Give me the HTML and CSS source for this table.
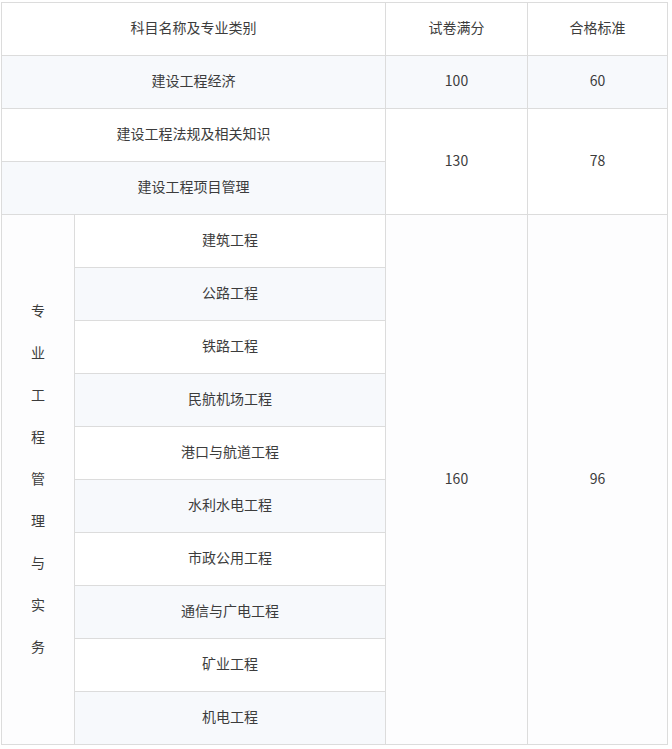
FILE: index.html
```html
<!DOCTYPE html>
<html lang="zh-CN">
<head>
<meta charset="utf-8">
<title>考试合格标准</title>
<link rel="stylesheet" href="styles.css">
</head>
<body>
<table class="score-table">
  <colgroup>
    <col class="c1">
    <col class="c2">
    <col class="c3">
    <col class="c4">
  </colgroup>
  <tr>
    <td colspan="2">科目名称及专业类别</td>
    <td>试卷满分</td>
    <td>合格标准</td>
  </tr>
  <tr>
    <td colspan="2">建设工程经济</td>
    <td>100</td>
    <td>60</td>
  </tr>
  <tr>
    <td colspan="2">建设工程法规及相关知识</td>
    <td rowspan="2">130</td>
    <td rowspan="2">78</td>
  </tr>
  <tr>
    <td colspan="2">建设工程项目管理</td>
  </tr>
  <tr>
    <td rowspan="10" class="vertical-cell"><span class="vertical">专业工程管理与实务</span></td>
    <td>建筑工程</td>
    <td rowspan="10" class="merged">160</td>
    <td rowspan="10" class="merged">96</td>
  </tr>
  <tr><td>公路工程</td></tr>
  <tr><td>铁路工程</td></tr>
  <tr><td>民航机场工程</td></tr>
  <tr><td>港口与航道工程</td></tr>
  <tr><td>水利水电工程</td></tr>
  <tr><td>市政公用工程</td></tr>
  <tr><td>通信与广电工程</td></tr>
  <tr><td>矿业工程</td></tr>
  <tr><td>机电工程</td></tr>
</table>
</body>
</html>
```
FILE: styles.css
```css
html, body {
  margin: 0;
  padding: 0;
  background: #ffffff;
}

body {
  padding: 2px 0 0 1px;
  font-family: "Noto Sans CJK SC", "Noto Sans", sans-serif;
  font-size: 14px;
  color: #3c3c3c;
}

.score-table {
  border-collapse: collapse;
  table-layout: fixed;
  width: 666px;
}

.c1 { width: 73px; }
.c2 { width: 311px; }
.c3 { width: 142px; }
.c4 { width: 140px; }

.score-table tr {
  height: 53px;
}

.score-table tr:nth-child(even) {
  background: #f7f9fc;
}

.score-table td {
  border: 1px solid #dcdcdc;
  padding: 0 0 4px 0;
  text-align: center;
  vertical-align: middle;
  line-height: 20px;
}

.vertical-cell,
.merged {
  background: #fdfdfe;
}

.vertical {
  display: block;
  width: 14px;
  margin: 0 auto;
  line-height: 42px;
  word-break: break-all;
}
```
